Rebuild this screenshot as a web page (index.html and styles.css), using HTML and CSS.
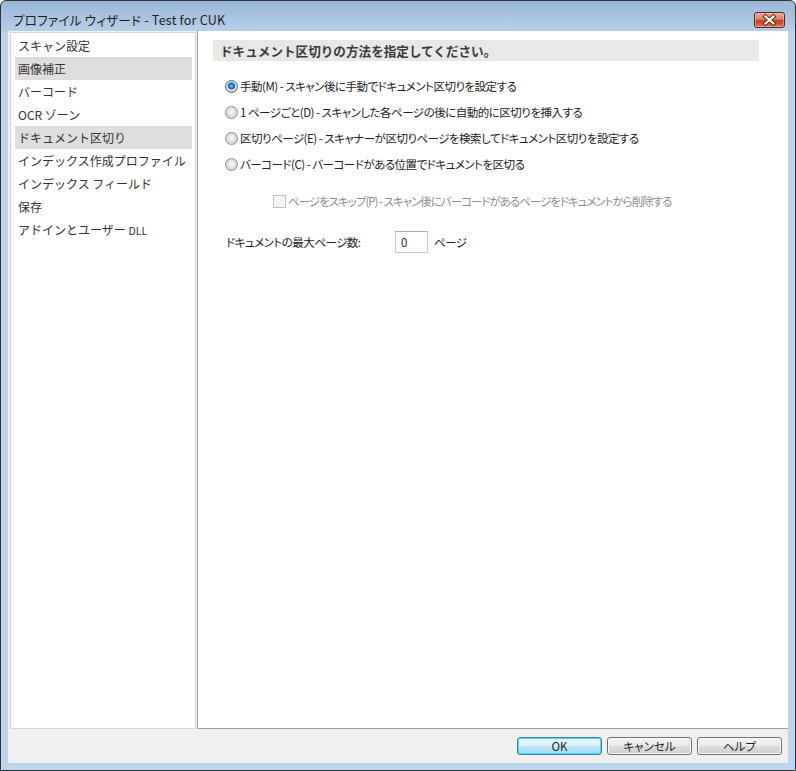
FILE: index.html
```html
<!DOCTYPE html>
<html lang="ja">
<head>
<meta charset="utf-8">
<title>プロファイル ウィザード</title>
<link rel="stylesheet" href="styles.css">
</head>
<body>
<div class="window">
  <div class="titlebar">
    <span class="title">プロファイル ウィザード - Test for CUK</span>
    <span class="close">
      <svg width="29" height="14" viewBox="0 0 29 14">
        <path d="M10.5 3.5 L18.5 10.5 M18.5 3.5 L10.5 10.5" stroke="#6b2416" stroke-width="4.2" stroke-linecap="square" fill="none"/>
        <path d="M10.5 3.5 L18.5 10.5 M18.5 3.5 L10.5 10.5" stroke="#ffffff" stroke-width="2.2" stroke-linecap="square" fill="none"/>
      </svg>
    </span>
  </div>
  <div class="client">
    <div class="main">
      <ul class="nav">
        <li>スキャン設定</li>
        <li class="sel">画像補正</li>
        <li>バーコード</li>
        <li>OCR ゾーン</li>
        <li class="sel">ドキュメント区切り</li>
        <li>インデックス作成プロファイル</li>
        <li>インデックス フィールド</li>
        <li>保存</li>
        <li>アドインとユーザー <span class="small">DLL</span></li>
      </ul>
      <div class="content">
        <div class="heading">ドキュメント区切りの方法を指定してください。</div>
        <div class="options">
          <div class="opt"><span class="radio on"></span>手動(M) - スキャン後に手動でドキュメント区切りを設定する</div>
          <div class="opt"><span class="radio"></span>1 ページごと(D) - スキャンした各ページの後に自動的に区切りを挿入する</div>
          <div class="opt"><span class="radio"></span>区切りページ(E) - スキャナーが区切りページを検索してドキュメント区切りを設定する</div>
          <div class="opt"><span class="radio"></span>バーコード(C) - バーコードがある位置でドキュメントを区切る</div>
        </div>
        <div class="check"><span class="box"></span>ページをスキップ(P) - スキャン後にバーコードがあるページをドキュメントから削除する</div>
        <div class="maxrow">
          <span class="maxlabel">ドキュメントの最大ページ数:</span>
          <span class="input">0</span>
          <span class="unit">ページ</span>
        </div>
      </div>
    </div>
    <div class="footer">
      <span class="btn default">OK</span>
      <span class="btn">キャンセル</span>
      <span class="btn">ヘルプ</span>
    </div>
  </div>
</div>
</body>
</html>
```
FILE: styles.css
```css
* { box-sizing: border-box; }
html, body { margin: 0; padding: 0; background: #ffffff; }
body {
  width: 796px;
  height: 771px;
  overflow: hidden;
  font-family: "Noto Sans CJK JP", "Noto Sans", sans-serif;
  color: #333333;
}
.window {
  width: 796px;
  height: 771px;
  border: 1px solid #2e3338;
  border-radius: 6px 6px 0 0;
  background: linear-gradient(#99b7d8 0, #b6cfe9 30px, #bdd5ed 31px, #bdd5ed 100%);
  padding: 0 7px 7px 7px;
  display: flex;
  flex-direction: column;
}
.titlebar {
  height: 30px;
  flex: none;
  display: flex;
  align-items: flex-start;
}
.title {
  margin: 10px 0 0 5px;
  font-size: 12.6px;
  line-height: 18px;
  color: #1e1e1e;
  flex: 1;
  font-feature-settings: "palt";
  letter-spacing: 0.2px;
}
.close {
  margin: 11px 3px 0 0;
  width: 31px;
  height: 16px;
  border: 1px solid #5c2018;
  border-radius: 3px;
  background: linear-gradient(#e9a999 0, #d9826d 45%, #c5432b 50%, #cc563b 80%, #e0866a 100%);
  display: flex;
  align-items: center;
  justify-content: center;
  box-shadow: inset 0 0 0 1px rgba(255,220,210,0.45);
}
.close svg { display: block; }
.client {
  flex: 1;
  background: #f0f0f0;
  display: flex;
  flex-direction: column;
}
.main {
  flex: 1;
  display: flex;
}
.nav {
  list-style: none;
  margin: 1px 1px 0 2px;
  padding: 1px 3px 0 4px;
  width: 186px;
  border: 1px solid #d6d6d6;
  background: #ffffff;
}
.nav li {
  height: 23px;
  line-height: 23px;
  padding-left: 3px;
  font-size: 12px;
  color: #333333;
  white-space: nowrap;
}
.nav li .small { font-size: 10.5px; }
.nav li.sel { background: #dedede; }
.content {
  flex: 1;
  background: #ffffff;
  border-left: 1px solid #a0a0a0;
  border-bottom: 1px solid #a0a0a0;
}
.heading {
  margin: 9px 29px 0 15px;
  height: 21px;
  line-height: 21px;
  padding-left: 7px;
  background: #e8e8e8;
  font-size: 12.6px;
  font-weight: bold;
  color: #3a3a3a;
}
.options { margin-top: 12px; padding-left: 27px; }
.opt, .check {
  height: 26px;
  display: flex;
  align-items: center;
  font-size: 11.5px;
  letter-spacing: -0.5px;
  font-feature-settings: "palt";
  color: #222222;
  white-space: nowrap;
}
.radio {
  width: 13px;
  height: 13px;
  margin-right: 2px;
  flex: none;
  border-radius: 50%;
  border: 1px solid #8e8f8f;
  background: radial-gradient(circle at 50% 45%, #fbfbfb 0, #e6e6e6 3px, #d2d2d2 6px);
}
.radio.on {
  border-color: #3d6a95;
  background:
    radial-gradient(circle at 50% 45%, #8fd8ff 0, #2f8fd4 1.5px, #1b5d99 3.3px, rgba(27,93,153,0) 3.8px),
    radial-gradient(circle at 50% 45%, #fbfbfb 0, #e6e6e6 3px, #cfd6dd 6px);
}
.check {
  margin-top: 11px;
  padding-left: 75px;
  color: #8d8d8d;
  letter-spacing: -1px;
}
.box {
  width: 13px;
  height: 13px;
  margin-right: 2px;
  flex: none;
  border: 1px solid #c2c2c2;
  background: #f4f4f4;
}
.maxrow {
  margin-top: 17px;
  padding-left: 28px;
  display: flex;
  align-items: center;
  height: 22px;
  font-size: 11.5px;
  letter-spacing: -0.5px;
  font-feature-settings: "palt";
  color: #222222;
}
.maxlabel { width: 169px; white-space: nowrap; }
.input {
  width: 33px;
  height: 22px;
  border: 1px solid #c9c9c9;
  border-top-color: #abadb3;
  background: #ffffff;
  padding-left: 5px;
  line-height: 20px;
}
.unit { margin-left: 6px; }
.footer {
  height: 34px;
  flex: none;
  display: flex;
  justify-content: flex-end;
  align-items: flex-start;
  padding: 8px 6px 0 0;
  gap: 5px;
}
.btn {
  width: 85px;
  height: 18px;
  border: 1px solid #707070;
  border-radius: 3px;
  background: linear-gradient(#f3f3f3 0, #ebebeb 50%, #dddddd 51%, #cfcfcf 100%);
  box-shadow: inset 0 0 0 1px #fcfcfc;
  font-size: 11.5px;
  font-feature-settings: "palt";
  line-height: 16px;
  text-align: center;
  color: #1e1e1e;
}
.btn.default {
  border-color: #3c7fb1;
  box-shadow: inset 0 0 0 1px #48d6fb;
  background: linear-gradient(#eaf6fd 0, #d9f0fc 50%, #bee6fd 51%, #a7d9f5 100%);
}
```
